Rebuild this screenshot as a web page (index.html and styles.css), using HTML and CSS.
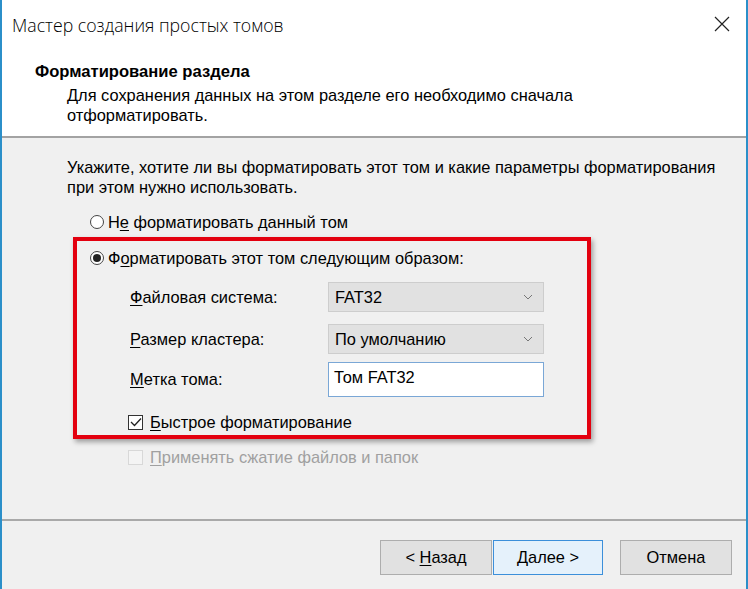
FILE: index.html
```html
<!DOCTYPE html>
<html lang="ru">
<head>
<meta charset="utf-8">
<title>Мастер создания простых томов</title>
<link rel="stylesheet" href="styles.css">
</head>
<body>
<div class="window">
  <div class="titlebar">
    <span class="title">Мастер создания простых томов</span>
    <svg class="close" width="16" height="16" viewBox="0 0 16 16"><path d="M1 1 L15 15 M15 1 L1 15" stroke="#222" stroke-width="1.2" fill="none"/></svg>
  </div>
  <div class="header">
    <div class="h-title">Форматирование раздела</div>
    <div class="h-sub">Для сохранения данных на этом разделе его необходимо сначала<br>отформатировать.</div>
  </div>
  <div class="content">
    <p class="intro">Укажите, хотите ли вы форматировать этот том и какие параметры форматирования<br>при этом нужно использовать.</p>
    <div class="radio-row first">
      <span class="radio"></span><span>Н<u>е</u> форматировать данный том</span>
    </div>
    <div class="highlight">
      <div class="radio-row">
        <span class="radio checked"></span><span>Ф<u>о</u>рматировать этот том следующим образом:</span>
      </div>
      <div class="field combo-field">
        <span class="label"><u>Ф</u>айловая система:</span>
        <div class="combo"><span>FAT32</span><svg width="10" height="6" viewBox="0 0 10 6"><path d="M1 1 L5 5 L9 1" stroke="#777" stroke-width="1" fill="none"/></svg></div>
      </div>
      <div class="field combo-field second">
        <span class="label"><u>Р</u>азмер кластера:</span>
        <div class="combo"><span>По умолчанию</span><svg width="10" height="6" viewBox="0 0 10 6"><path d="M1 1 L5 5 L9 1" stroke="#777" stroke-width="1" fill="none"/></svg></div>
      </div>
      <div class="field text-field">
        <span class="label"><u>М</u>етка тома:</span>
        <div class="textbox">Том FAT32</div>
      </div>
      <div class="check-row">
        <span class="check"><svg width="12" height="10" viewBox="0 0 12 10"><path d="M1 5 L4.5 8.5 L11 1.5" stroke="#222" stroke-width="1.3" fill="none"/></svg></span><span><u>Б</u>ыстрое форматирование</span>
      </div>
    </div>
    <div class="check-row disabled">
      <span class="check"></span><span><u>П</u>рименять сжатие файлов и папок</span>
    </div>
  </div>
  <div class="footer">
    <button class="btn">&lt; <u>Н</u>азад</button>
    <button class="btn primary"><u>Д</u>алее &gt;</button>
    <button class="btn cancel">Отмена</button>
  </div>
</div>
</body>
</html>
```
FILE: styles.css
```css
* { box-sizing: border-box; }
html, body { margin: 0; padding: 0; }
body {
  width: 748px;
  height: 589px;
  overflow: hidden;
  font-family: "Liberation Sans", Arial, sans-serif;
  font-size: 16.4px;
  color: #000;
  background: #f0f0f0;
}
u { text-decoration: underline; text-underline-offset: 2px; }
.window {
  width: 748px;
  height: 589px;
  border-left: 2px solid #2b8fc9;
  border-right: 2px solid #2b8fc9;
  display: flex;
  flex-direction: column;
  background: #f0f0f0;
}
.titlebar {
  height: 50px;
  background: #fff;
  display: flex;
  align-items: center;
  justify-content: space-between;
  padding: 0 16px 0 10px;
}
.title {
  font-family: "Open Sans", sans-serif;
  font-weight: 300;
  font-size: 17.7px;
  color: #000;
}
.close { margin-top: -2px; }
.header {
  height: 88px;
  background: #fff;
  border-bottom: 2px solid #a3a3a3;
  padding: 12px 0 0 33px;
}
.h-title {
  font-weight: bold;
  font-size: 16.6px;
  line-height: 20px;
}
.h-sub {
  padding-left: 32px;
  line-height: 20px;
  margin-top: 3px;
}
.content {
  flex: 1;
  padding: 19px 0 0 65px;
  border-bottom: 2px solid #a9a9a9;
}
.intro {
  margin: 0;
  line-height: 20px;
}
.radio-row {
  display: flex;
  align-items: center;
  height: 20px;
  gap: 4px;
}
.radio-row.first { margin: 15px 0 0 23px; }
.radio {
  width: 14px;
  height: 14px;
  border: 1px solid #444;
  border-radius: 50%;
  background: #fff;
  display: flex;
  align-items: center;
  justify-content: center;
}
.radio.checked::after {
  content: "";
  width: 8px;
  height: 8px;
  border-radius: 50%;
  background: #222;
}
.highlight {
  margin: 5px 0 0 6px;
  width: 518px;
  height: 202px;
  border: 4px solid #e3000f;
  box-shadow: 2px 3px 5px rgba(0, 0, 0, 0.35);
  padding: 7px 0 0 13px;
}
.field {
  display: flex;
  align-items: center;
  padding-left: 40px;
}
.label { width: 198px; }
.combo-field { margin-top: 14px; }
.combo-field.second { margin-top: 12px; }
.combo {
  width: 216px;
  height: 30px;
  background: #e1e1e1;
  border: 1px solid #cdcdcd;
  display: flex;
  align-items: center;
  justify-content: space-between;
  padding: 0 10px 0 6px;
}
.text-field { margin-top: 8px; }
.textbox {
  width: 216px;
  height: 35px;
  background: #fff;
  border: 1px solid #7aa7d6;
  padding: 5px 0 0 5px;
}
.check-row {
  display: flex;
  align-items: center;
  gap: 7px;
  height: 20px;
  margin: 15px 0 0 38px;
}
.check {
  width: 15px;
  height: 15px;
  border: 1px solid #333;
  background: #fff;
  display: flex;
  align-items: center;
  justify-content: center;
}
.check-row.disabled {
  margin: 8px 0 0 61px;
  color: #a0a0a0;
}
.check-row.disabled .check {
  border-color: #d8d8d8;
  background: #f4f4f4;
}
.footer {
  height: 68px;
  display: flex;
  align-items: flex-start;
  padding: 19px 0 0 378px;
}
.btn {
  width: 112px;
  height: 35px;
  font-family: "Liberation Sans", Arial, sans-serif;
  font-size: 16.4px;
  color: #000;
  background: #e1e1e1;
  border: 1px solid #adadad;
  padding: 0;
}
.btn.primary {
  width: 110px;
  margin-left: 1px;
  background: #e5f1fb;
  border-color: #3c8fda;
}
.btn.cancel { margin-left: 17px; }
```
